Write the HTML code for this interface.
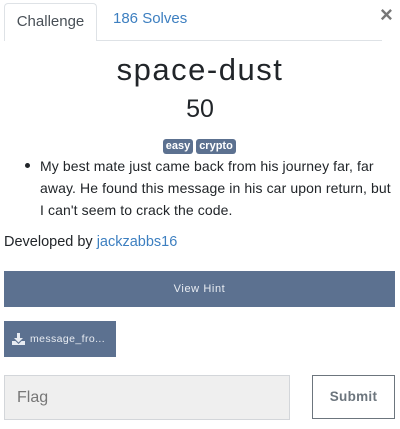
<!DOCTYPE html>
<html><head><meta charset="utf-8"><style>
*{box-sizing:border-box;margin:0;padding:0}
body{width:400px;height:429px;background:#fff;font-family:"Liberation Sans",sans-serif;color:#212529;position:relative;overflow:hidden}
.abs{position:absolute}
.tab{left:4px;top:3px;width:93px;height:38px;border:1px solid #dee2e6;border-bottom:none;border-radius:4px 4px 0 0;background:#fff;font-size:15px;color:#495057;text-align:center;line-height:36px}
.line{left:96px;top:40px;width:286px;height:1px;background:#dee2e6}
.solves{left:113px;top:10px;font-size:15px;color:#3d7fc0}
.close{left:380px;top:2px;font-size:22px;color:#777;font-weight:bold}
h1{position:absolute;left:0;width:400px;top:52px;text-align:center;font-weight:normal;font-size:31px;letter-spacing:1.5px}
.pts{left:0;width:400px;top:95px;text-align:center;font-size:25px}
.badge{top:139px;height:15px;background:#5c7190;color:#fff;font-size:11px;font-weight:bold;border-radius:3px;line-height:15px;text-align:center}
.desc{left:40px;top:155px;width:352px;font-size:14px;line-height:22px;letter-spacing:.1px}
.dot{left:25px;top:163px;width:5px;height:5px;border-radius:50%;background:#212529}
.dev{left:4px;top:234px;font-size:14.5px}
.dev span{color:#3d7fc0}
.hint{left:4px;top:271px;width:391px;height:36px;background:#5c7190;color:#e8ecf2;font-size:11px;text-align:center;line-height:37px;letter-spacing:.6px}
.dl{left:4px;top:321px;width:112px;height:36px;background:#5c7190;color:#e8ecf2;font-size:10.5px;line-height:37px;padding-left:26px;letter-spacing:.4px}
.flag{left:4px;top:375px;width:286px;height:45px;background:#efefef;border:1px solid #d3d6da;font-size:16px;color:#777;line-height:43px;padding-left:12px}
.sub{left:312px;top:375px;width:83px;height:44px;border:1px solid #6c757d;font-size:13.5px;font-weight:bold;color:#6c757d;text-align:center;line-height:42px;letter-spacing:.3px}
</style></head><body>
<div class="abs tab">Challenge</div>
<div class="abs line"></div>
<div class="abs solves">186 Solves</div>
<div class="abs close">×</div>
<h1>space-dust</h1>
<div class="abs pts">50</div>
<div class="abs badge" style="left:163px;width:30px">easy</div>
<div class="abs badge" style="left:196px;width:40px">crypto</div>
<div class="abs dot"></div>
<div class="abs desc">My best mate just came back from his journey far, far away. He found this message in his car upon return, but<br>I can't seem to crack the code.</div>
<div class="abs dev">Developed by <span>jackzabbs16</span></div>
<div class="abs hint">View Hint</div>
<div class="abs dl"><svg class="abs" style="left:8px;top:12px" width="13" height="12" viewBox="0 0 13 12"><path d="M5 0h3v5h3l-4.5 4.5L2 5h3z" fill="#e8ecf2"/><path d="M0 8h3.5l3 3 3-3H13v4H0z" fill="#e8ecf2"/></svg>message_fro...</div>
<div class="abs flag">Flag</div>
<div class="abs sub">Submit</div>
</body></html>
